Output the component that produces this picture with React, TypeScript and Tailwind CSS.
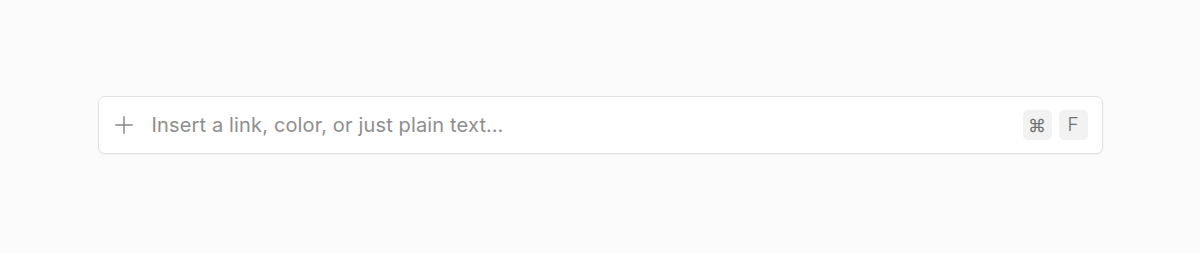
import { Plus } from "lucide-react";

export default function App() {
  return (
    <div className="flex min-h-[253px] items-center justify-center bg-[#fbfbfb] pb-[3px] font-['Inter',sans-serif]">
      <div className="flex h-[58px] w-[1005px] items-center rounded-[7px] border border-[#e2e2e2] bg-white pl-[11px] pr-[14px] shadow-[0_1px_2px_rgba(0,0,0,0.05)]">
        <Plus size={28} strokeWidth={1.25} className="text-[#858585]" />
        <input
          className="ml-[14px] flex-1 bg-transparent text-[20px] tracking-[0.15px] text-[#333] outline-none placeholder:text-[#8e8e8e]"
          placeholder="Insert a link, color, or just plain text…"
        />
        <div className="flex gap-[7px]">
          <kbd className="flex h-[30px] w-[29px] items-center justify-center rounded-[5px] bg-[#f2f2f2] font-['Inter',sans-serif] text-[18px] text-[#707070]">⌘</kbd>
          <kbd className="flex h-[30px] w-[29px] items-center justify-center rounded-[5px] bg-[#f2f2f2] font-['Inter',sans-serif] text-[19px] font-light text-[#707070]">F</kbd>
        </div>
      </div>
    </div>
  );
}
